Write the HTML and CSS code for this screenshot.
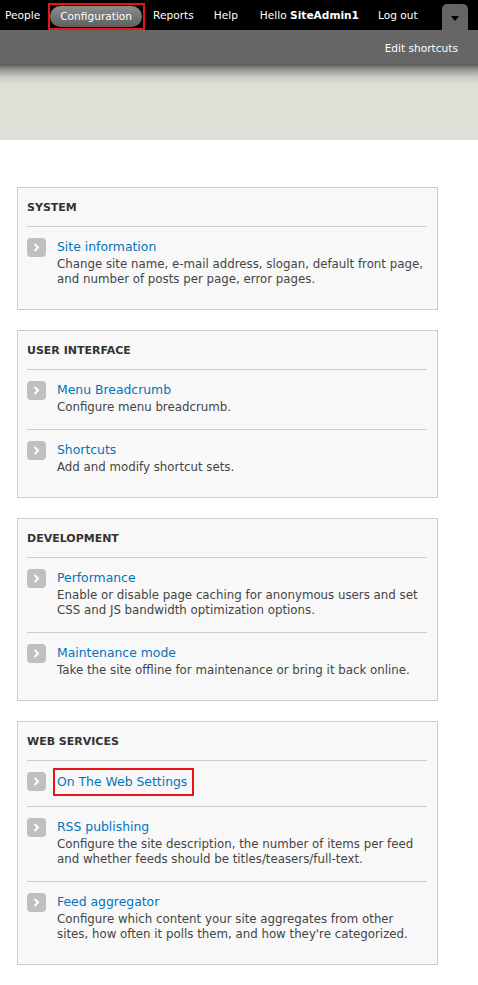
FILE: index.html
```html
<!DOCTYPE html>
<html>
<head>
<meta charset="utf-8">
<link rel="stylesheet" href="styles.css">
</head>
<body>
<div class="toolbar">
  <ul class="menu">
    <li><a class="tb-link first">People</a></li>
    <li><span class="mark-top"><a class="tb-link active">Configuration</a></span></li>
    <li><a class="tb-link">Reports</a></li>
    <li><a class="tb-link">Help</a></li>
    <li><a class="tb-link hello">Hello <strong>SiteAdmin1</strong></a></li>
    <li><a class="tb-link">Log out</a></li>
  </ul>
  <div class="drawer-tab">
    <svg width="8" height="5" viewBox="0 0 8 5"><path d="M0 0H8L4 5Z" fill="#000"/></svg>
  </div>
</div>
<div class="shortcuts">
  <a class="edit-shortcuts">Edit shortcuts</a>
</div>
<div class="header-band"></div>

<div class="page">
  <div class="panel">
    <h3 class="panel-title">System</h3>
    <div class="item">
      <span class="arrow"><svg width="19" height="19" viewBox="0 0 19 19"><path d="M7.5 6L11 9.5L7.5 13" fill="none" stroke="#fff" stroke-width="2"/></svg></span>
      <div class="item-body">
        <a class="item-link">Site information</a>
        <div class="item-desc">Change site name, e-mail address, slogan, default front page, and number of posts per page, error pages.</div>
      </div>
    </div>
  </div>

  <div class="panel">
    <h3 class="panel-title">User interface</h3>
    <div class="item">
      <span class="arrow"><svg width="19" height="19" viewBox="0 0 19 19"><path d="M7.5 6L11 9.5L7.5 13" fill="none" stroke="#fff" stroke-width="2"/></svg></span>
      <div class="item-body">
        <a class="item-link">Menu Breadcrumb</a>
        <div class="item-desc">Configure menu breadcrumb.</div>
      </div>
    </div>
    <div class="item">
      <span class="arrow"><svg width="19" height="19" viewBox="0 0 19 19"><path d="M7.5 6L11 9.5L7.5 13" fill="none" stroke="#fff" stroke-width="2"/></svg></span>
      <div class="item-body">
        <a class="item-link">Shortcuts</a>
        <div class="item-desc">Add and modify shortcut sets.</div>
      </div>
    </div>
  </div>

  <div class="panel">
    <h3 class="panel-title">Development</h3>
    <div class="item">
      <span class="arrow"><svg width="19" height="19" viewBox="0 0 19 19"><path d="M7.5 6L11 9.5L7.5 13" fill="none" stroke="#fff" stroke-width="2"/></svg></span>
      <div class="item-body">
        <a class="item-link">Performance</a>
        <div class="item-desc">Enable or disable page caching for anonymous users and set CSS and JS bandwidth optimization options.</div>
      </div>
    </div>
    <div class="item">
      <span class="arrow"><svg width="19" height="19" viewBox="0 0 19 19"><path d="M7.5 6L11 9.5L7.5 13" fill="none" stroke="#fff" stroke-width="2"/></svg></span>
      <div class="item-body">
        <a class="item-link">Maintenance mode</a>
        <div class="item-desc">Take the site offline for maintenance or bring it back online.</div>
      </div>
    </div>
  </div>

  <div class="panel">
    <h3 class="panel-title">Web services</h3>
    <div class="item">
      <span class="arrow"><svg width="19" height="19" viewBox="0 0 19 19"><path d="M7.5 6L11 9.5L7.5 13" fill="none" stroke="#fff" stroke-width="2"/></svg></span>
      <div class="item-body">
        <span class="mark-link"><a class="item-link">On The Web Settings</a></span>
      </div>
    </div>
    <div class="item">
      <span class="arrow"><svg width="19" height="19" viewBox="0 0 19 19"><path d="M7.5 6L11 9.5L7.5 13" fill="none" stroke="#fff" stroke-width="2"/></svg></span>
      <div class="item-body">
        <a class="item-link">RSS publishing</a>
        <div class="item-desc">Configure the site description, the number of items per feed and whether feeds should be titles/teasers/full-text.</div>
      </div>
    </div>
    <div class="item">
      <span class="arrow"><svg width="19" height="19" viewBox="0 0 19 19"><path d="M7.5 6L11 9.5L7.5 13" fill="none" stroke="#fff" stroke-width="2"/></svg></span>
      <div class="item-body">
        <a class="item-link">Feed aggregator</a>
        <div class="item-desc">Configure which content your site aggregates from other sites, how often it polls them, and how they're categorized.</div>
      </div>
    </div>
  </div>
</div>
</body>
</html>
```

FILE: styles.css
```css
* { box-sizing: border-box; }
html, body { margin: 0; padding: 0; background: #fff; }
body { font-family: "DejaVu Sans", Verdana, sans-serif; color: #444; }

.toolbar {
  height: 30px;
  background: #000;
  display: flex;
  align-items: center;
}
.menu {
  list-style: none;
  margin: 0;
  padding: 0;
  display: flex;
  align-items: center;
}
.menu li { display: flex; align-items: center; }
.tb-link {
  display: block;
  color: #fff;
  font-size: 10.6px;
  line-height: 21px;
  padding: 0 10px;
  white-space: nowrap;
}
.tb-link.first { padding-left: 5px; padding-right: 9px; }
.tb-link.hello { padding-left: 12px; padding-right: 9px; }
.tb-link strong { font-weight: bold; }
.mark-top {
  border: 2px solid #e8141a;
  padding: 0 1px 0 0;
  height: 27px;
  display: flex;
  align-items: center;
  margin: 2px -2px 0 -1px;
}
.tb-link.active {
  background: linear-gradient(#8c8c8c, #5f5f5f);
  border-radius: 11px;
}
.drawer-tab {
  margin-left: auto;
  margin-right: 10px;
  align-self: flex-end;
  width: 26px;
  height: 26px;
  background: #666;
  border-radius: 5px 5px 0 0;
  display: flex;
  justify-content: center;
  padding-top: 12px;
}
.drawer-tab svg { display: block; }

.shortcuts {
  height: 34px;
  background: #666;
  display: flex;
  justify-content: flex-end;
  align-items: center;
  padding: 0 20px 0 0;
}
.edit-shortcuts {
  color: #fff;
  font-size: 10.6px;
  line-height: 16px;
  margin-top: 1px;
}
.header-band {
  height: 76px;
  background: linear-gradient(#595959 0px, #7c7c78 3px, #a9a9a3 8px, #cfcfc8 14px, #dfdfd8 21px, #dfdfd8 100%);
}

.page {
  padding: 47px 0 20px 17px;
}
.panel {
  width: 421px;
  border: 1px solid #ccc;
  background: #f8f8f8;
  padding: 10px 10px 8px 9px;
  margin-bottom: 20px;
}
.panel-title {
  margin: 0 0 8px;
  font-size: 11px;
  line-height: 20px;
  font-weight: bold;
  text-transform: uppercase;
  color: #333;
}
.item {
  display: flex;
  align-items: flex-start;
  border-top: 1px solid #ccc;
  padding: 10px 0 14px;
}
.arrow {
  flex: none;
  width: 19px;
  height: 19px;
  margin-top: 1px;
  margin-right: 11px;
  background: #bfbfbf;
  border-radius: 4px;
}
.arrow svg { display: block; }
.item-body { flex: 1; min-width: 0; }
.item-link {
  display: block;
  color: #0074bd;
  font-size: 12.4px;
  line-height: 20px;
}
.mark-link {
  display: inline-block;
  border: 2px solid #e8141a;
  padding: 2px 5px 2px 2px;
  margin: -4px 0 -4px -4px;
}
.item-desc {
  font-size: 11.8px;
  line-height: 15px;
  color: #444;
}
```
